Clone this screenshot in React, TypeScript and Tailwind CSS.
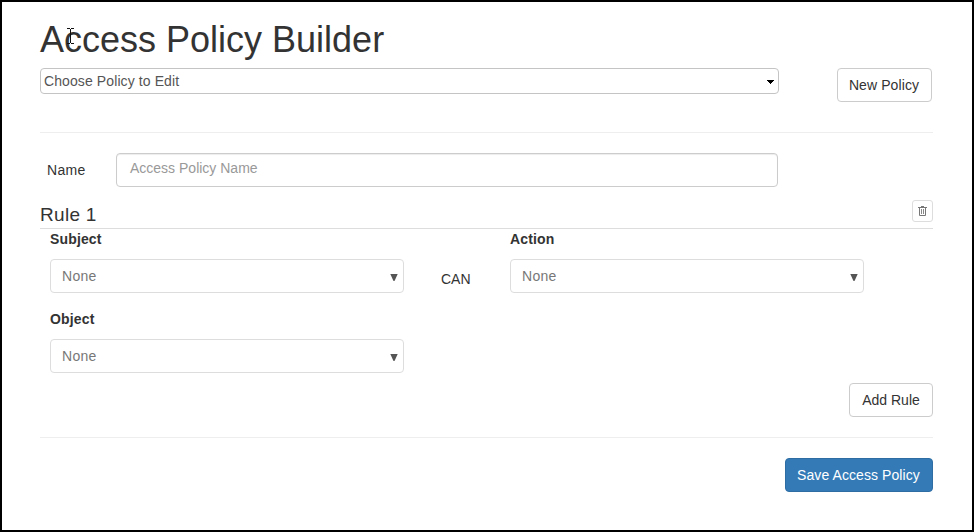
import React from "react";

function Select() {
  return (
    <div className="flex h-[34px] w-[354px] items-center justify-between rounded-[4px] border border-[#ddd] pl-[11px] pr-[5px] text-[#777]">
      <span className="tracking-[0.3px]">None</span>
      <svg className="mt-[2px]" width="8" height="7" viewBox="0 0 8 7"><path d="M.3 0h7.400L4.500 7h-1z" fill="#555" /></svg>
    </div>
  );
}

export default function App() {
  return (
    <div className="h-[532px] w-[974px] border-2 border-black bg-white pl-[38px] pr-[39px] pt-[18px] font-['Liberation_Sans',Arial,sans-serif] text-[14px] leading-5 text-[#333]">
      <div className="relative h-[48px]">
        <h1 className="text-[36px] leading-[40px] whitespace-nowrap">Access Policy Builder</h1>
        <svg className="absolute left-[27px] top-[8px]" width="7" height="16" viewBox="0 0 7 16" fill="none" stroke="#111" shapeRendering="crispEdges"><path d="M0 .5h3M4 .5h3M3.500 1v14M0 15.500h3M4 15.500h3" /></svg>
      </div>
      <div className="flex h-[65px] items-start justify-between border-b border-[#eee]">
        <div className="flex h-[26px] w-[739px] items-center justify-between rounded-[4px] border border-[#c4c4c4] pl-[3px] pr-[4px] text-[#555]">
          <span className="tracking-[0.1px]">Choose Policy to Edit</span>
          <svg className="mt-[2px]" width="7" height="4" viewBox="0 0 7 4" shapeRendering="crispEdges"><path d="M0 0h7v1H6v1H5v1H4v1H3V3H2V2H1V1H0z" fill="#000" /></svg>
        </div>
        <button className="mr-[1px] h-[34px] w-[95px] rounded-[4px] border border-[#ccc] pr-[1px] tracking-[0.1px]">New Policy</button>
      </div>
      <div className="flex pt-5">
        <label className="w-[76px] pl-[7px] pt-[7px] tracking-[0.3px]">Name</label>
        <div className="h-[34px] w-[662px] rounded-[4px] border border-[#ccc] pl-[13px] pt-[4px] text-[#999] shadow-[inset_0_1px_1px_rgba(0,0,0,.075)]">Access Policy Name</div>
      </div>
      <div className="flex h-[42px] items-end justify-between border-b border-[#ddd]">
        <h2 className="pb-[3px] text-[19px] leading-[20px] tracking-[0.3px]">Rule 1</h2>
        <button className="mb-[6px] flex h-[22px] w-[21px] items-center justify-center rounded-[3px] border border-[#ddd]">
          <svg width="9" height="10" viewBox="0 0 9 10" fill="none" stroke="#777"><path d="M0 1.500h9M3 .5h3M1.500 2v7.500h6V2" /><path d="M3.500 3v5M5.500 3v5" stroke="#888" /></svg>
        </button>
      </div>
      <div className="flex h-[80px] pl-[10px]">
        <div className="w-[391px]"><div className="mb-[10px] font-bold tracking-[0.15px]">Subject</div><Select /></div>
        <div className="w-[69px] pt-[40px]">CAN</div>
        <div><div className="mb-[10px] font-bold tracking-[0.15px]">Action</div><Select /></div>
      </div>
      <div className="h-[74px] pl-[10px]"><div className="mb-[10px] font-bold tracking-[0.15px]">Object</div><Select /></div>
      <div className="flex h-[55px] justify-end border-b border-[#eee]"><button className="h-[34px] w-[84px] rounded-[4px] border border-[#ccc]">Add Rule</button></div>
      <div className="flex justify-end pt-5"><button className="h-[34px] w-[148px] rounded-[4px] border border-[#2e6da4] bg-[#337ab7] pr-[1px] tracking-[0.08px] text-white">Save Access Policy</button></div>
    </div>
  );
}
